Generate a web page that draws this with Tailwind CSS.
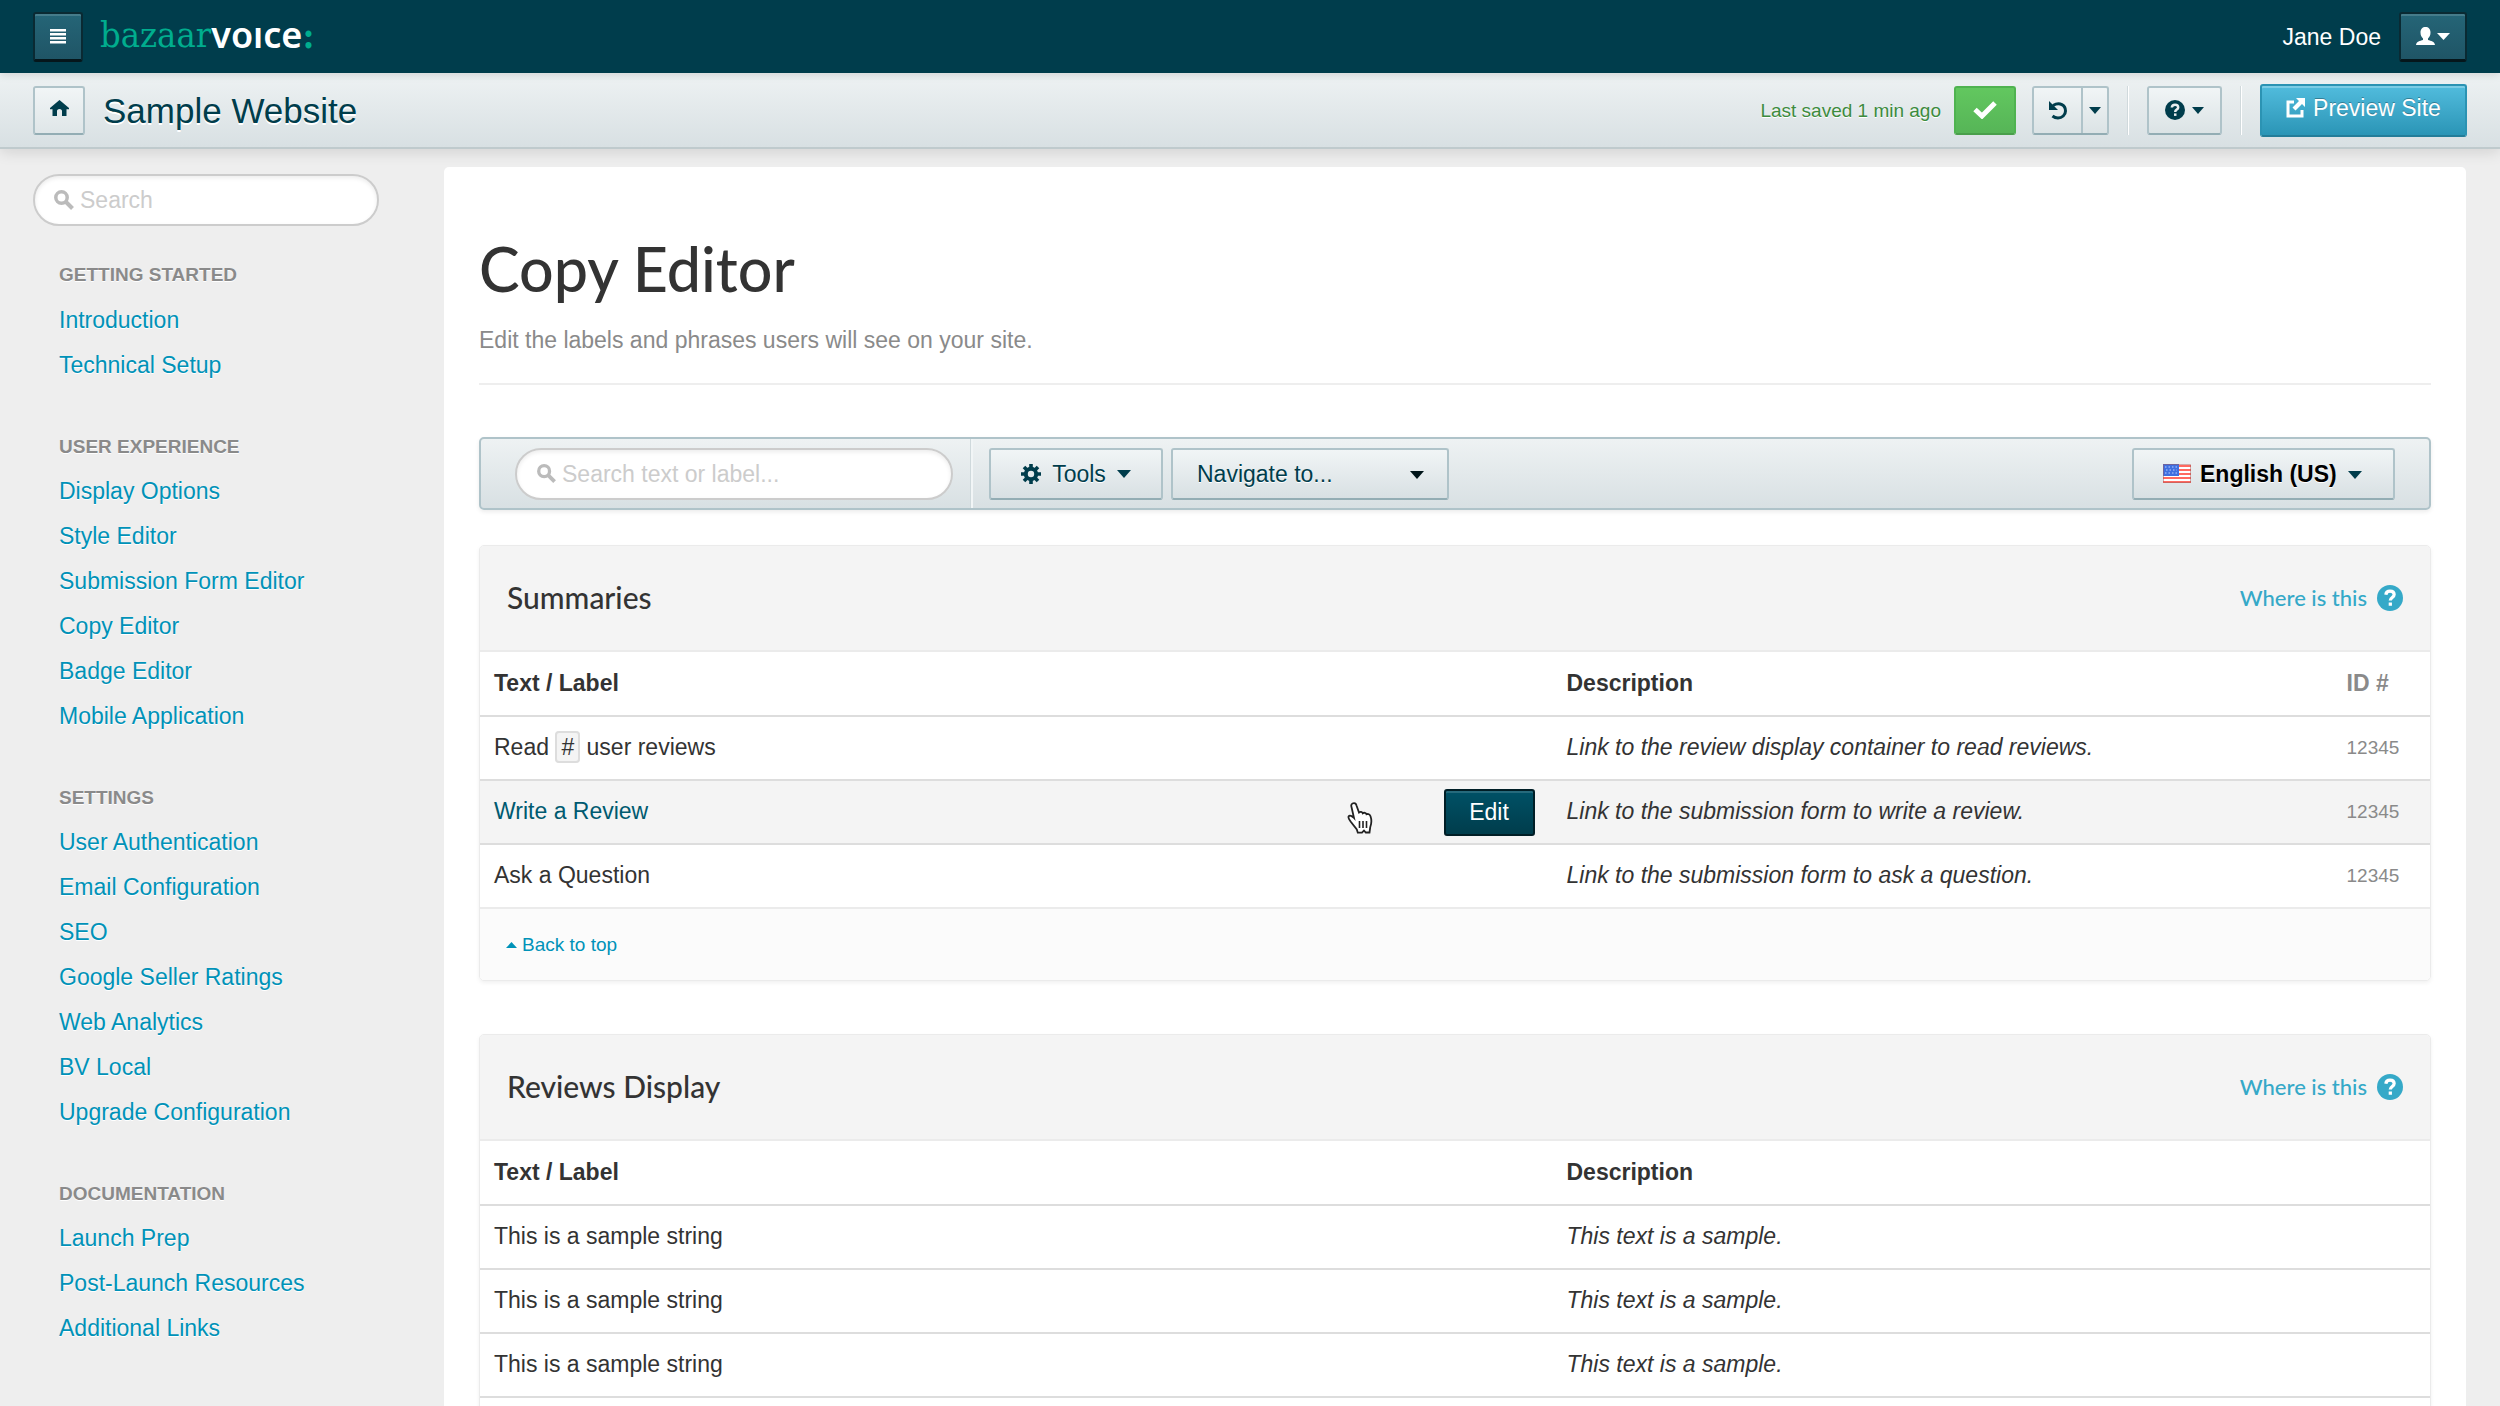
<!DOCTYPE html>
<html lang="en">
<head>
  <meta charset="UTF-8"/>
  <meta name="viewport" content="width=device-width, initial-scale=1"/>
  <script src="https://cdn.jsdelivr.net/npm/@tailwindcss/browser@4"></script>
  <title>Copy Editor - Sample Website</title>
</head>
<body class="flex h-screen flex-col overflow-hidden bg-[#eee] font-['Liberation_Sans',Arial,sans-serif] text-[23px] leading-[30px] text-[#333]">
  <!-- Top bar -->
  <header class="relative z-20 flex h-[73px] shrink-0 items-center justify-between bg-[#003d4c] px-[33px] shadow-[0_2px_8px_rgba(0,0,0,0.12)]">
    <div class="flex items-center gap-[17px]">
      <button aria-label="Menu" class="flex h-[50px] w-[50px] items-center justify-center rounded-[3px] border-2 border-b-3 border-[#0a2a33] border-b-[#05161b] bg-linear-to-b from-[#256577] to-[#1f5566] shadow-[inset_0_2px_0_rgba(255,255,255,0.15)]">
        <svg width="16" height="15" viewBox="0 0 16 15" fill="#fff"><path d="M0 0h16v2.400H0zM0 4h16v2.400H0zM0 8h16v2.400H0zM0 12h16v2.400H0z"/></svg>
      </button>
      <a href="#" class="flex items-center pb-1 font-['DejaVu_Serif_Condensed','DejaVu_Serif',serif] text-[36px] leading-[44px] text-[#00ad8e]">bazaar<span class="font-['Noto_Sans',sans-serif] font-semibold text-white">voıce</span><span class="font-bold">:</span></a>
    </div>
    <div class="flex items-center gap-[18px] text-white">
      <span>Jane Doe</span>
      <button aria-label="Account" class="flex h-[50px] w-[68px] items-center justify-center gap-[2px] rounded-[3px] border-2 border-b-3 border-[#0a2a33] border-b-[#05161b] bg-linear-to-b from-[#256577] to-[#1f5566] shadow-[inset_0_2px_0_rgba(255,255,255,0.15)]">
        <svg width="19" height="18" viewBox="0 0 19 18" fill="#fff"><path d="M9.500 0c3 0 5 2 5 5.500 0 3-1 4.500-2.500 6v1.500c3 .8 6.500 1.500 7 5H0c.5-3.500 4-4.200 7-5v-1.500c-1.500-1.500-2.500-3-2.500-6C4.500 2 6.500 0 9.500 0z"/></svg>
        <svg width="13" height="7" viewBox="0 0 13 7" fill="#fff"><path d="M0 0h13L6.500 7z"/></svg>
      </button>
    </div>
  </header>

  <!-- Site bar -->
  <div class="relative z-10 flex h-[76px] shrink-0 items-center justify-between border-b-2 border-[#bfcacd] bg-linear-to-b from-[#eef2f3] to-[#d8e0e3] px-[33px] shadow-[0_3px_14px_rgba(0,0,0,0.12)]">
    <div class="flex items-center gap-[18px]">
      <a href="#" aria-label="Home" class="flex h-[49px] w-[52px] items-center justify-center rounded-[3px] border-2 border-[#afc3c9] border-b-[#93adb4] bg-linear-to-b from-[#f1f5f6] to-[#dfe6e8] pb-1">
        <svg width="19" height="16" viewBox="0 0 19 16" fill="#003d4c"><path d="M9.500 0 19 8v1.200h-2.500V16H12v-5c0-1-.8-2-2.500-2S7 10 7 11v5H2.500V9.200H0V8z"/></svg>
      </a>
      <h2 class="pt-[2px] text-[35px] leading-[44px] text-[#003d4c] [text-shadow:0_2px_0_#fff]">Sample Website</h2>
    </div>
    <div class="flex items-center">
      <span class="mr-[13px] pt-[2px] text-[19px] text-[#3c8b3e] [text-shadow:0_1px_0_#fff]">Last saved 1 min ago</span>
      <button aria-label="Saved" class="flex h-[49px] w-[62px] items-center justify-center rounded-[3px] border-2 border-[#4fb350] border-b-[#4a9f4b] bg-linear-to-b from-[#62c75f] to-[#56b557]">
        <svg width="24" height="18" viewBox="0 0 24 18" fill="none" stroke="#fff" stroke-width="5"><path d="M2 8.500l7 6.500L22 2"/></svg>
      </button>
      <div class="ml-4 flex h-[49px] rounded-[3px] border-2 border-[#afc3c9] border-b-[#93adb4] bg-linear-to-b from-[#f1f5f6] to-[#dbe3e5]">
        <button aria-label="Undo" class="flex w-[49px] items-center justify-center border-r-2 border-[#afc3c9]">
          <svg width="20" height="19" viewBox="0 0 20 19"><path d="M5 4.500C12 .5 17.500 4.500 17.500 10c0 4-3.500 7-7.500 7-2 0-4-.8-5.500-2" fill="none" stroke="#003d4c" stroke-width="3"/><path d="M1 0v9h9z" fill="#003d4c"/></svg>
        </button>
        <button aria-label="Undo history" class="flex w-[24px] items-center justify-center">
          <svg width="12" height="7" viewBox="0 0 12 7" fill="#003d4c"><path d="M0 0h12L6 7z"/></svg>
        </button>
      </div>
      <div class="mx-[18px] h-[49px] w-[2px] border-r border-white bg-[#d0d9dc]"></div>
      <button aria-label="Help" class="flex h-[49px] w-[75px] items-center justify-center gap-[7px] rounded-[3px] border-2 border-[#afc3c9] border-b-[#93adb4] bg-linear-to-b from-[#f1f5f6] to-[#dbe3e5]">
        <svg width="20" height="20" viewBox="0 0 20 20"><circle cx="10" cy="10" r="10" fill="#003d4c"/><path d="M6.800 7.500C7 5.500 8.300 4.700 10 4.700c2 0 3.200 1 3.200 2.700 0 2.300-3 2.100-3 4.600" fill="none" stroke="#e8edef" stroke-width="2.500"/><path d="M9 13.400h2.500v2.500H9z" fill="#e8edef"/></svg>
        <svg width="12" height="7" viewBox="0 0 12 7" fill="#003d4c"><path d="M0 0h12L6 7z"/></svg>
      </button>
      <div class="mx-[18px] h-[49px] w-[2px] border-r border-white bg-[#d0d9dc]"></div>
      <button class="flex h-[53px] w-[207px] items-center justify-center gap-2 rounded-[3px] border-2 border-[#2b93b3] border-b-[#237d99] bg-linear-to-b from-[#51bcdd] to-[#2a95b6] pb-1 text-white shadow-[inset_0_2px_0_rgba(255,255,255,0.25)] [text-shadow:0_-1px_0_rgba(0,0,0,0.3)]">
        <svg width="19" height="20" viewBox="0 0 19 20"><path d="M8 4H2v14h14v-6" fill="none" stroke="#fff" stroke-width="3"/><path d="M10 0h9v9l-3-3-6.500 6.500-3-3L13 3z" fill="#fff"/></svg>
        Preview Site
      </button>
    </div>
  </div>

  <div class="flex min-h-0 flex-1 pr-[34px] pt-[18px]">
    <!-- Sidebar -->
    <aside class="w-[444px] shrink-0 pl-[33px] pt-[7px]">
      <label class="flex h-[52px] w-[346px] items-center gap-[6px] rounded-full border-2 border-[#ccc] bg-white pl-[19px] shadow-[inset_0_2px_4px_rgba(0,0,0,0.08)]">
        <svg width="20" height="20" viewBox="0 0 20 20" fill="none" stroke="#bbb"><circle cx="7.500" cy="7.500" r="5.700" stroke-width="3.500"/><path d="M12 12l6.500 6.500" stroke-width="4"/></svg>
        <input type="text" aria-label="Search" placeholder="Search" class="w-[240px] outline-none placeholder:text-[#ccc]"/>
      </label>
      <nav class="pl-[26px] pt-[26px] leading-[45px] text-[#0092b8] [text-shadow:0_1px_0_#fff]">
        <h3 class="text-[19px] font-bold leading-[46px] text-[#8a8a8a]">GETTING STARTED</h3>
        <ul class="mb-9">
          <li><a href="#">Introduction</a></li>
          <li><a href="#">Technical Setup</a></li>
        </ul>
        <h3 class="text-[19px] font-bold leading-[45px] text-[#8a8a8a]">USER EXPERIENCE</h3>
        <ul class="mb-9">
          <li><a href="#">Display Options</a></li>
          <li><a href="#">Style Editor</a></li>
          <li><a href="#">Submission Form Editor</a></li>
          <li><a href="#">Copy Editor</a></li>
          <li><a href="#">Badge Editor</a></li>
          <li><a href="#">Mobile Application</a></li>
        </ul>
        <h3 class="text-[19px] font-bold leading-[45px] text-[#8a8a8a]">SETTINGS</h3>
        <ul class="mb-9">
          <li><a href="#">User Authentication</a></li>
          <li><a href="#">Email Configuration</a></li>
          <li><a href="#">SEO</a></li>
          <li><a href="#">Google Seller Ratings</a></li>
          <li><a href="#">Web Analytics</a></li>
          <li><a href="#">BV Local</a></li>
          <li><a href="#">Upgrade Configuration</a></li>
        </ul>
        <h3 class="text-[19px] font-bold leading-[45px] text-[#8a8a8a]">DOCUMENTATION</h3>
        <ul>
          <li><a href="#">Launch Prep</a></li>
          <li><a href="#">Post-Launch Resources</a></li>
          <li><a href="#">Additional Links</a></li>
        </ul>
      </nav>
    </aside>

    <!-- Content -->
    <main class="min-w-0 flex-1 rounded-t-[5px] bg-white px-[35px] pt-[62px]">
      <h1 class="font-[Lato,sans-serif] text-[61px] font-medium leading-[80px]">Copy Editor</h1>
      <p class="mt-4 text-[#8a8a8a]">Edit the labels and phrases users will see on your site.</p>
      <hr class="mt-7 border-t-2 border-[#eee]"/>

      <!-- Toolbar -->
      <div class="mt-[52px] flex h-[73px] items-center rounded-[5px] border-2 border-[#afc3c9] bg-linear-to-b from-[#eef2f3] to-[#d8e0e3] shadow-[0_2px_4px_rgba(0,0,0,0.08)]">
        <label class="ml-[34px] flex h-[52px] w-[438px] items-center gap-[6px] rounded-full border-2 border-[#ccc] bg-white pl-[20px] shadow-[inset_0_2px_4px_rgba(0,0,0,0.08)]">
          <svg width="19" height="19" viewBox="0 0 20 20" fill="none" stroke="#bbb"><circle cx="7.500" cy="7.500" r="5.700" stroke-width="3.500"/><path d="M12 12l6.500 6.500" stroke-width="4"/></svg>
          <input type="text" aria-label="Search text or label" placeholder="Search text or label..." class="w-[340px] outline-none placeholder:text-[#ccc]"/>
        </label>
        <div class="ml-[17px] mr-4 h-full w-[3px] border-r-2 border-[#f1f5f6] bg-[#cfd9dc]"></div>
        <button class="flex h-[52px] w-[174px] items-center justify-center gap-[11px] rounded-[3px] border-2 border-[#afc3c9] border-b-[#93adb4] bg-linear-to-b from-[#f1f5f6] to-[#d8e0e3] text-[#003d4c] [text-shadow:0_1px_0_#fff]">
          <svg width="20" height="20" viewBox="0 0 20 20" fill="none" stroke="#003d4c"><circle cx="10" cy="10" r="5.200" stroke-width="4"/><path d="M10 0v4M10 16v4M0 10h4M16 10h4M3 3l3 3M14 14l3 3M17 3l-3 3M6 14l-3 3" stroke-width="3.600"/></svg>
          Tools
          <svg width="14" height="8" viewBox="0 0 14 8" fill="#003d4c"><path d="M0 0h14L7 8z"/></svg>
        </button>
        <div class="relative ml-2">
          <select aria-label="Navigate to" class="h-[52px] w-[278px] appearance-none rounded-[3px] border-2 border-[#afc3c9] border-b-[#93adb4] bg-linear-to-b from-[#f1f5f6] to-[#d8e0e3] pl-6 text-[#003d4c] [text-shadow:0_1px_0_#fff]">
            <option>Navigate to...</option>
            <option>Summaries</option>
            <option>Reviews Display</option>
          </select>
          <svg class="pointer-events-none absolute right-[25px] top-[23px]" width="14" height="8" viewBox="0 0 14 8" fill="#001519"><path d="M0 0h14L7 8z"/></svg>
        </div>
        <div class="relative ml-auto mr-[34px]">
          <select aria-label="Language" class="h-[52px] w-[263px] appearance-none rounded-[3px] border-2 border-[#afc3c9] border-b-[#93adb4] bg-linear-to-b from-[#f1f5f6] to-[#d8e0e3] pl-[66px] font-bold text-black [text-shadow:0_1px_0_#fff]">
            <option>English (US)</option>
          </select>
          <svg class="pointer-events-none absolute left-[31px] top-4" width="28" height="19" viewBox="0 0 28 19">
            <path d="M0 0h28v19H0z" fill="#fff"/>
            <path d="M0 1h28v2H0zM0 5h28v2H0zM0 9h28v2H0zM0 13h28v2H0zM0 17h28v2H0z" fill="#ff6a60"/>
            <path d="M0 0h16v12H0z" fill="#3f6fe0"/>
            <path d="M2 3h12M3 6h11M2 9h12" stroke="#bcd0ff" stroke-dasharray="1.500 2"/>
            <path d="M.5.500h27v18H.5z" fill="none" stroke="#a05a5a" stroke-opacity=".5"/>
          </svg>
          <svg class="pointer-events-none absolute right-[33px] top-[23px]" width="14" height="8" viewBox="0 0 14 8" fill="#003d4c"><path d="M0 0h14L7 8z"/></svg>
        </div>
      </div>

      <!-- Summaries -->
      <section class="mt-[35px] overflow-hidden rounded-[5px] border border-[#ebebeb] shadow-[0_2px_4px_rgba(0,0,0,0.06)]">
        <div class="flex h-[106px] items-center justify-between border-b-2 border-[#ebebeb] bg-[#f4f4f4] px-[27px] font-[Lato,sans-serif]">
          <h2 class="pb-[2px] text-[30px] font-medium leading-[40px]">Summaries</h2>
          <a href="#" class="flex items-center gap-[10px] text-[22px] font-medium text-[#35a9c8]">Where is this
            <svg width="26" height="26" viewBox="0 0 20 20"><circle cx="10" cy="10" r="10" fill="#35a9c8"/><path d="M6.800 7.500C7 5.500 8.300 4.700 10 4.700c2 0 3.200 1 3.200 2.700 0 2.300-3 2.100-3 4.600" fill="none" stroke="#fff" stroke-width="2.500"/><path d="M9 13.400h2.500v2.500H9z" fill="#fff"/></svg>
          </a>
        </div>
        <table class="w-full table-fixed text-left">
          <thead>
            <tr class="h-16 border-b-2 border-[#ddd]">
              <th class="w-[55%] px-[14px] pb-[2px]">Text / Label</th>
              <th class="w-[40%] px-[14px] pb-[2px]">Description</th>
              <th class="w-[5%] pb-[2px] pl-[14px] text-[#8a8a8a]">ID #</th>
            </tr>
          </thead>
          <tbody>
            <tr class="h-16 border-b-2 border-[#ddd]">
              <td class="px-[14px] pb-[2px]">Read <code class="rounded-[4px] border-2 border-[#ddd] bg-[#f4f4f4] px-1 py-px font-['Liberation_Sans',Arial,sans-serif]">#</code> user reviews</td>
              <td class="px-[14px] pb-[2px] italic">Link to the review display container to read reviews.</td>
              <td class="pl-[14px] text-[19px] text-[#8a8a8a]">12345</td>
            </tr>
            <tr class="h-16 border-b-2 border-[#ddd] bg-[#f4f4f4]">
              <td class="relative pl-[14px] pr-[18px]">
                <div class="flex items-center justify-between">
                  <a href="#" class="pb-[2px] text-[#005a70]">Write a Review</a>
                  <button class="h-[47px] w-[91px] rounded-[3px] border-2 border-[#001e26] bg-linear-to-b from-[#005166] to-[#003d4c] text-white shadow-[inset_0_2px_0_rgba(255,255,255,0.15)]">Edit</button>
                </div>
                <!-- Hand pointer -->
                <svg class="absolute right-[179px] top-[21px]" width="27" height="32" viewBox="0 0 27 32"><path d="M5.500 1.500C7.500.5 9 1.500 9.500 3.500L12 10.500c1.200-1 3.200-.7 3.800.8 1.200-1 3.200-.5 3.700 1 1.500-.8 3.300 0 4 2 1.800 5 1 7.500-.3 11l-.7 5.200h-3.700l-1.800-2-2 2.200h-4.200l-1-3.200-5.800-7.500c-1.500-2.200-3.200-3.800-2.400-5.500.9-1.600 3.400-.6 5.400 1.500L4.500 5c-.5-1.500-.3-2.800 1-3.500z" fill="#fff" stroke="#222" stroke-width="1.800"/><path d="M12.500 19v7M16 19v7M19.500 19v7" stroke="#222" stroke-width="1.600"/></svg>
              </td>
              <td class="px-[14px] pb-[2px] italic">Link to the submission form to write a review.</td>
              <td class="pl-[14px] text-[19px] text-[#8a8a8a]">12345</td>
            </tr>
            <tr class="h-16 border-b-2 border-[#ebebeb]">
              <td class="px-[14px] pb-[2px]">Ask a Question</td>
              <td class="px-[14px] pb-[2px] italic">Link to the submission form to ask a question.</td>
              <td class="pl-[14px] text-[19px] text-[#8a8a8a]">12345</td>
            </tr>
          </tbody>
        </table>
        <div class="flex h-[71px] items-center bg-[#fbfbfb] px-[26px] text-[19px]">
          <a href="#" class="flex items-center gap-[5px] text-[#0092b8]">
            <svg width="11" height="6" viewBox="0 0 11 6" fill="#0092b8"><path d="M0 6h11L5.500 0z"/></svg>
            Back to top
          </a>
        </div>
      </section>

      <!-- Reviews Display -->
      <section class="mt-[53px] overflow-hidden rounded-[5px] border border-[#ebebeb] shadow-[0_2px_4px_rgba(0,0,0,0.06)]">
        <div class="flex h-[106px] items-center justify-between border-b-2 border-[#ebebeb] bg-[#f4f4f4] px-[27px] font-[Lato,sans-serif]">
          <h2 class="pb-[2px] text-[30px] font-medium leading-[40px]">Reviews Display</h2>
          <a href="#" class="flex items-center gap-[10px] text-[22px] font-medium text-[#35a9c8]">Where is this
            <svg width="26" height="26" viewBox="0 0 20 20"><circle cx="10" cy="10" r="10" fill="#35a9c8"/><path d="M6.800 7.500C7 5.500 8.300 4.700 10 4.700c2 0 3.200 1 3.200 2.700 0 2.300-3 2.100-3 4.600" fill="none" stroke="#fff" stroke-width="2.500"/><path d="M9 13.400h2.500v2.500H9z" fill="#fff"/></svg>
          </a>
        </div>
        <table class="w-full table-fixed text-left">
          <thead>
            <tr class="h-16 border-b-2 border-[#ddd]">
              <th class="w-[55%] px-[14px] pb-[2px]">Text / Label</th>
              <th class="w-[45%] px-[14px] pb-[2px]">Description</th>
            </tr>
          </thead>
          <tbody>
            <tr class="h-16 border-b-2 border-[#ddd]">
              <td class="px-[14px] pb-[2px]">This is a sample string</td>
              <td class="px-[14px] pb-[2px] italic">This text is a sample.</td>
            </tr>
            <tr class="h-16 border-b-2 border-[#ddd]">
              <td class="px-[14px] pb-[2px]">This is a sample string</td>
              <td class="px-[14px] pb-[2px] italic">This text is a sample.</td>
            </tr>
            <tr class="h-16 border-b-2 border-[#ddd]">
              <td class="px-[14px] pb-[2px]">This is a sample string</td>
              <td class="px-[14px] pb-[2px] italic">This text is a sample.</td>
            </tr>
            <tr class="h-16">
              <td></td>
              <td></td>
            </tr>
          </tbody>
        </table>
      </section>
    </main>
  </div>
</body>
</html>
